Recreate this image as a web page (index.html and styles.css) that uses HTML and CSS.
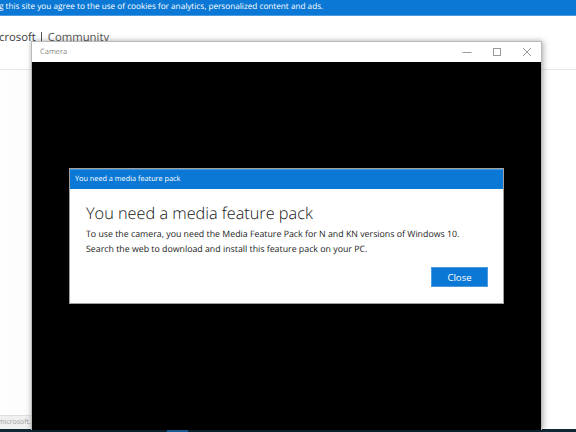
FILE: index.html
```html
<!DOCTYPE html>
<html>
<head>
<meta charset="utf-8">
<link rel="stylesheet" href="styles.css">
</head>
<body>
<div class="page">
  <div class="banner">g this site you agree to the use of cookies for analytics, personalized content and ads.</div>
  <div class="header">
    <span class="brand">crosoft</span>
    <span class="sep"></span>
    <span class="community">Community</span>
  </div>
  <div class="status">microsoft.c</div>
  <div class="taskbar"><span class="task-active"></span></div>

  <div class="window">
    <div class="titlebar">
      <span class="app-title">Camera</span>
      <div class="controls">
        <svg class="ctl" width="10" height="10" viewBox="0 0 10 10"><path d="M0.5 5.5h9" stroke="#9a9a9a" stroke-width="1" fill="none"/></svg>
        <svg class="ctl" width="10" height="10" viewBox="0 0 10 10"><rect x="1.5" y="1.5" width="7" height="7" stroke="#9a9a9a" stroke-width="1" fill="none"/></svg>
        <svg class="ctl" width="10" height="10" viewBox="0 0 10 10"><path d="M1 1L9 9M9 1L1 9" stroke="#9a9a9a" stroke-width="1" fill="none"/></svg>
      </div>
    </div>
    <div class="viewport"></div>
  </div>

  <div class="dialog">
    <div class="dlg-title">You need a media feature pack</div>
    <div class="dlg-body">
      <h1 class="dlg-heading">You need a media feature pack</h1>
      <p class="dlg-text">To use the camera, you need the Media Feature Pack for N and KN versions of Windows 10.<br>Search the web to download and install this feature pack on your PC.</p>
      <div class="dlg-actions"><button class="btn">Close</button></div>
    </div>
  </div>
</div>
</body>
</html>
```
FILE: styles.css
```css
html, body {
  margin: 0;
  padding: 0;
}
body {
  width: 576px;
  height: 432px;
  overflow: hidden;
  background: #ffffff;
  font-family: "Open Sans", "Noto Sans", "Liberation Sans", sans-serif;
  text-rendering: geometricPrecision;
}
.page {
  position: relative;
  width: 576px;
  height: 432px;
  overflow: hidden;
  background: linear-gradient(to right, #ffffff 0, #fbfbfb 30px, #ffffff 30px);
}
.banner {
  height: 15px;
  line-height: 14px;
  background: #0a78d4;
  border-bottom: 1px solid #4c9be0;
  color: #ffffff;
  font-size: 8.2px;
  white-space: nowrap;
  text-indent: -1px;
  overflow: hidden;
}
.header {
  height: 53px;
  border-bottom: 1px solid #e8e8e8;
  display: flex;
  align-items: flex-start;
  white-space: nowrap;
  background: #ffffff;
}
.brand {
  font-size: 11.3px;
  color: #3b3b3b;
  margin-left: -1px;
  margin-top: 12px;
  line-height: 20px;
}
.sep {
  width: 1px;
  height: 12px;
  background: #555555;
  margin: 16px 6px 0 5px;
}
.community {
  font-size: 11.3px;
  color: #555555;
  margin-top: 12px;
  line-height: 20px;
}
.status {
  position: absolute;
  left: 0;
  top: 415px;
  width: 31px;
  height: 14px;
  background: #f0f0f0;
  border-top: 1px solid #dedede;
  color: #9a9a9a;
  font-size: 7px;
  line-height: 13px;
  white-space: nowrap;
  overflow: hidden;
  text-indent: -2px;
}
.taskbar {
  position: absolute;
  left: 0;
  top: 429px;
  width: 576px;
  height: 3px;
  background: #0e2836;
}
.task-active {
  position: absolute;
  left: 167px;
  top: 0;
  width: 21px;
  height: 3px;
  background: #1c6aa8;
}
.window {
  position: absolute;
  left: 31px;
  top: 41px;
  width: 509px;
  height: 388px;
  border: 1px solid #b9b9b9;
  border-bottom: none;
  background: #000000;
  box-shadow: 2px 0 6px rgba(0,0,0,0.25), -1px 0 4px rgba(0,0,0,0.12);
  display: flex;
  flex-direction: column;
}
.titlebar {
  height: 20px;
  background: #ffffff;
  display: flex;
  align-items: center;
  justify-content: space-between;
  flex: none;
}
.app-title {
  font-size: 7.5px;
  color: #8a8a8a;
  margin-left: 8px;
}
.controls {
  display: flex;
  gap: 20px;
  margin-right: 9px;
  align-items: center;
}
.ctl {
  display: block;
}
.viewport {
  flex: 1;
  background: #000000;
}
.dialog {
  position: absolute;
  left: 69px;
  top: 168px;
  width: 433px;
  height: 134px;
  border: 1px solid #a0a0a0;
  background: #ffffff;
  display: flex;
  flex-direction: column;
}
.dlg-title {
  height: 19px;
  background: #0a78d4;
  border-top: 1px solid #3d95e0;
  color: #ffffff;
  font-size: 7.3px;
  line-height: 18px;
  padding-left: 5px;
  flex: none;
}
.dlg-body {
  padding: 0 15px 0 16px;
  display: flex;
  flex-direction: column;
}
.dlg-heading {
  margin: 12px 0 0 0;
  font-size: 16.3px;
  font-weight: 300;
  color: #111111;
  line-height: 24px;
}
.dlg-text {
  margin: 2px 0 0 0;
  font-size: 8.8px;
  line-height: 14.5px;
  color: #1a1a1a;
  white-space: nowrap;
}
.dlg-actions {
  display: flex;
  justify-content: flex-end;
  margin-top: 11px;
}
.btn {
  width: 57px;
  height: 20px;
  background: #0a78d4;
  border: 1px solid #4a9ae0;
  color: #ffffff;
  font-family: "Open Sans", "Noto Sans", "Liberation Sans", sans-serif;
  font-size: 9.6px;
  padding: 0;
}
```
